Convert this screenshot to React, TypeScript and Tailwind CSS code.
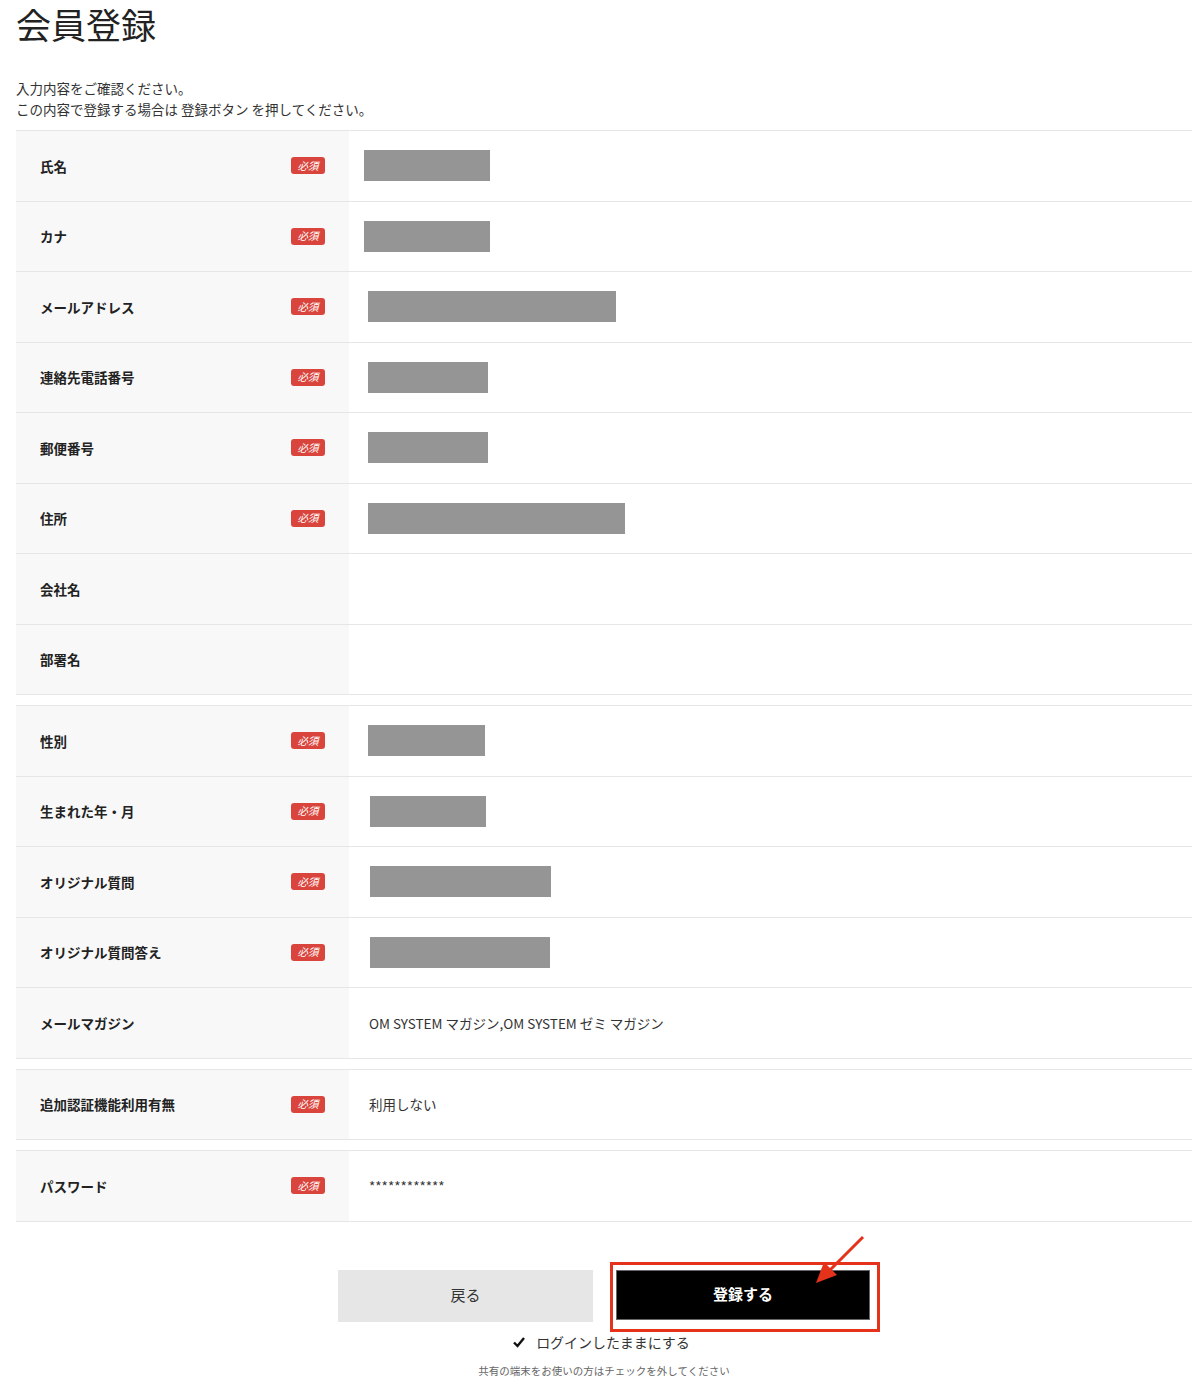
import React from "react";

type Row = {
  label: string;
  required?: boolean;
  block?: { x: number; w: number };
  text?: string;
};

const groups: Row[][] = [
  [
    { label: "氏名", required: true, block: { x: 15, w: 126 } },
    { label: "カナ", required: true, block: { x: 15, w: 126 } },
    { label: "メールアドレス", required: true, block: { x: 19, w: 248 } },
    { label: "連絡先電話番号", required: true, block: { x: 19, w: 120 } },
    { label: "郵便番号", required: true, block: { x: 19, w: 120 } },
    { label: "住所", required: true, block: { x: 19, w: 257 } },
    { label: "会社名" },
    { label: "部署名" },
  ],
  [
    { label: "性別", required: true, block: { x: 19, w: 117 } },
    { label: "生まれた年・月", required: true, block: { x: 21, w: 116 } },
    { label: "オリジナル質問", required: true, block: { x: 21, w: 181 } },
    { label: "オリジナル質問答え", required: true, block: { x: 21, w: 180 } },
    { label: "メールマガジン", text: "OM SYSTEM マガジン,OM SYSTEM ゼミ マガジン" },
  ],
  [{ label: "追加認証機能利用有無", required: true, text: "利用しない" }],
  [{ label: "パスワード", required: true, text: "************" }],
];

function Badge() {
  return (
    <span className="inline-flex h-[17px] w-[34px] items-center justify-center rounded-[3px] bg-[#d9453d] text-[10.5px] italic leading-none text-white">
      必須
    </span>
  );
}

function FieldRow({ row }: { row: Row }) {
  return (
    <div className="flex h-[70.5px] border-b border-[#e6e6e6]">
      <div className="flex w-[333px] shrink-0 items-center justify-between bg-[#f8f8f8] pl-6 pr-6">
        <span className="text-[13.5px] font-bold text-[#222]">{row.label}</span>
        {row.required && <Badge />}
      </div>
      <div className="flex flex-1 items-center">
        {row.block && (
          <div className="h-[31px] bg-[#959595]" style={{ marginLeft: row.block.x, width: row.block.w }} />
        )}
        {row.text && <span className="pl-5 text-[13.5px] text-[#333]">{row.text}</span>}
      </div>
    </div>
  );
}

export default function App() {
  return (
    <div className="min-h-[1388px] bg-white pl-4 pr-2 text-[#222]" style={{ fontFamily: '"Noto Sans CJK JP", "Noto Sans", sans-serif' }}>
      <h1 className="pt-[1px] text-[35px] font-normal leading-[46px] text-[#222]">会員登録</h1>
      <div className="mt-[31px] text-[13.5px] leading-[21px] text-[#333]">
        <p>入力内容をご確認ください。</p>
        <p>この内容で登録する場合は 登録ボタン を押してください。</p>
      </div>

      <div className="mt-[10px] flex flex-col gap-[10px]">
        {groups.map((g, i) => (
          <div key={i} className="border-t border-[#e6e6e6]">
            {g.map(r => (
              <FieldRow key={r.label} row={r} />
            ))}
          </div>
        ))}
      </div>

      <div className="mt-[48px] flex justify-center gap-[23px]">
        <button className="h-[52px] w-[255px] bg-[#e6e6e6] text-[15px] text-[#333]">戻る</button>
        <div className="relative">
          <button className="h-[50px] w-[254px] border border-[#666] bg-black text-[15px] font-bold text-white">
            登録する
          </button>
          <div className="pointer-events-none absolute -left-[6px] -right-[10px] -top-[8px] -bottom-[10px] border-[3px] border-[#e4321b]" />
          <svg className="pointer-events-none absolute left-[190px] -top-[36px]" width="60" height="60" viewBox="0 0 60 60">
            <line x1="57" y1="3" x2="22" y2="38" stroke="#e4321b" strokeWidth="3" />
            <polygon points="10,49 18,28 31,41" fill="#e4321b" />
          </svg>
        </div>
      </div>

      <div className="mt-[10px] flex items-center justify-center gap-[10px] pr-[6px]">
        <svg width="14" height="14" viewBox="0 0 14 14">
          <path d="M2 7.5 L5.5 11 L12 3" fill="none" stroke="#111" strokeWidth="2.4" />
        </svg>
        <span className="text-[14px] text-[#333]">ログインしたままにする</span>
      </div>
      <p className="mt-[10px] text-center text-[10.5px] text-[#666]">共有の端末をお使いの方はチェックを外してください</p>
    </div>
  );
}
